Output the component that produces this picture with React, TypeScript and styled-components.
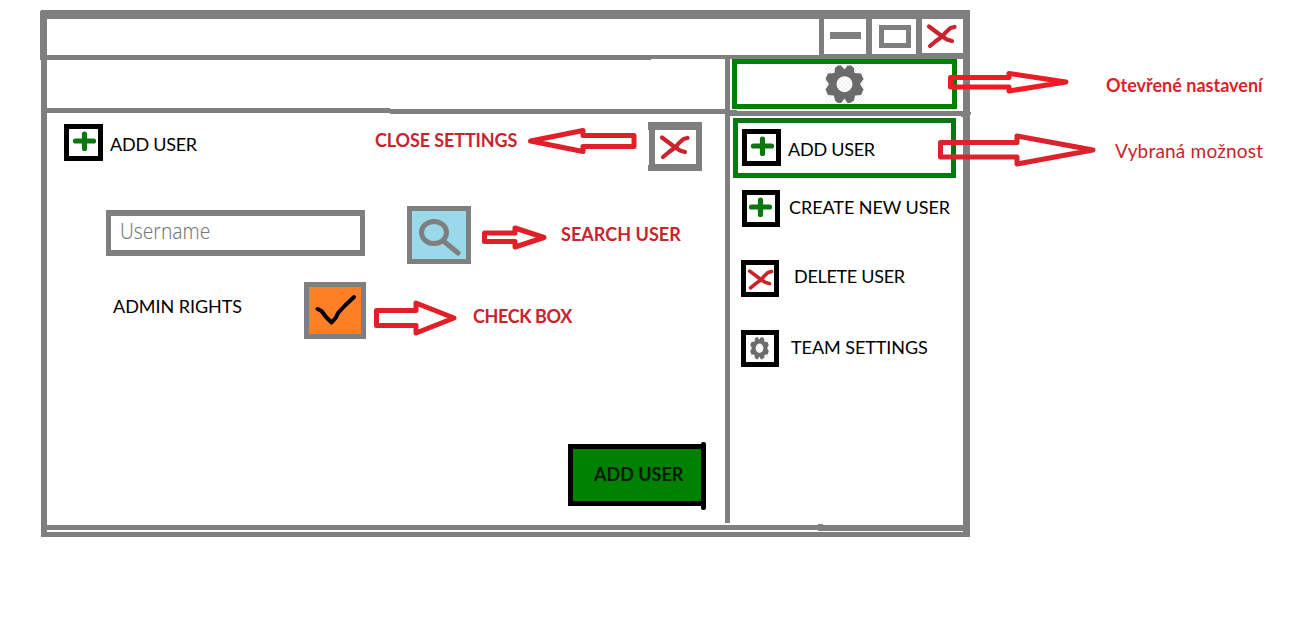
import React from "react";
import styled, { createGlobalStyle, css } from "styled-components";

const GRAY = "#7f7f7f";
const GREEN = "#008000";
const RED = "#ed1c24";
const BRICK = "#c8242e";

const GlobalStyle = createGlobalStyle`
  * { box-sizing: border-box; }
  body { margin: 0; background: #fff; }
  button { padding: 0; font: inherit; }
  svg { display: block; flex: none; }
`;

const Page = styled.div`
  display: flex;
  align-items: flex-start;
  width: 1314px;
  height: 623px;
  padding: 10px 0 0 41px;
  overflow: hidden;
  background: #fff;
  font-family: Lato, "Liberation Sans", sans-serif;
`;

const Window = styled.main`
  position: relative;
  flex: none;
  display: flex;
  flex-direction: column;
  width: 929px;
  height: 527px;
  border-style: solid;
  border-color: ${GRAY};
  border-width: 9px 7px 5px 6px;

  &::before {
    content: "";
    position: absolute;
    left: -7px;
    top: -8px;
    width: 1px;
    height: 49px;
    background: ${GRAY};
  }
`;

const TitleBar = styled.header`
  flex: none;
  display: flex;
  height: 41px;
  margin-bottom: -1px;
`;

const Caption = styled.div`
  flex: 1;
  display: flex;
  align-items: flex-start;
  padding-top: 36px;
`;

const Rule = styled.div<{ $w?: number; $h: number }>`
  ${(p) => (p.$w ? css`width: ${p.$w}px;` : css`flex: 1;`)}
  height: ${(p) => p.$h}px;
  background: ${GRAY};
`;

const WindowButton = styled.button<{ $w: number; $edge: number; $base: number }>`
  display: flex;
  align-items: flex-start;
  width: ${(p) => p.$w}px;
  height: 40px;
  border: 0 solid ${GRAY};
  border-left-width: ${(p) => p.$edge}px;
  border-bottom-width: ${(p) => p.$base}px;
  background: #fff;
`;

const MinimizeMark = styled.span`
  width: 31px;
  height: 7px;
  margin: 13px 0 0 6px;
  background: ${GRAY};
`;

const MaximizeMark = styled.span`
  width: 32px;
  height: 23px;
  margin: 6px 0 0 7px;
  border: 5px solid ${GRAY};
`;

const Body = styled.div`
  flex: 1;
  display: flex;
  min-height: 0;
`;

const Main = styled.section`
  display: flex;
  flex-direction: column;
  width: 678px;
`;

const Toolbar = styled.div`
  flex: none;
  display: flex;
  align-items: flex-end;
  height: 55px;
`;

const ToolbarRule = styled.div<{ $w: number; $lift: number }>`
  width: ${(p) => p.$w}px;
  height: 5px;
  margin-bottom: ${(p) => p.$lift}px;
  background: ${GRAY};
`;

const Row = styled.div<{ $h: number; $indent: number }>`
  flex: none;
  display: flex;
  align-items: flex-start;
  height: ${(p) => p.$h}px;
  padding-left: ${(p) => p.$indent}px;
`;

const Label = styled.span<{
  $w: number;
  $top?: number;
  $left?: number;
  $size?: number;
  $track?: number;
  $bold?: boolean;
  $color?: string;
}>`
  flex: none;
  display: block;
  width: ${(p) => p.$w}px;
  margin: ${(p) => p.$top ?? 0}px 0 0 ${(p) => p.$left ?? 0}px;
  font-size: ${(p) => p.$size ?? 18}px;
  font-weight: ${(p) => (p.$bold ? 700 : 400)};
  line-height: 22px;
  letter-spacing: ${(p) => p.$track ?? 0}px;
  color: ${(p) => p.$color ?? "#000"};
  white-space: nowrap;
`;

const IconBox = styled.span<{ $w?: number; $top?: number }>`
  flex: none;
  display: block;
  width: ${(p) => p.$w ?? 38}px;
  height: 37px;
  margin-top: ${(p) => p.$top ?? 0}px;
  border: 5px solid #000;
  background: #fff;
`;

const CloseBox = styled.button`
  position: relative;
  width: 53px;
  height: 49px;
  margin: 8px 0 0 12px;
  border: solid ${GRAY};
  border-width: 8px 6px 7px 6px;
  background: #fff;

  &::before,
  &::after {
    content: "";
    position: absolute;
    left: -7px;
    width: 1px;
    background: ${GRAY};
  }
  &::before { top: -8px; height: 8px; }
  &::after { bottom: -7px; height: 6px; }
`;

const NameField = styled.div`
  flex: none;
  width: 259px;
  height: 46px;
  margin-top: 4px;
  padding-left: 9px;
  border: solid ${GRAY};
  border-width: 6px 5px;
`;

const Placeholder = styled.span`
  display: inline-block;
  font: 300 21.5px/29px "Noto Sans", "Open Sans", sans-serif;
  color: #777;
  transform: scaleX(0.89);
  transform-origin: left center;
`;

const SearchButton = styled.button`
  flex: none;
  width: 64px;
  height: 58px;
  margin-left: 42px;
  border: 5px solid ${GRAY};
  background: #99d9ea;
`;

const CheckBox = styled.button`
  flex: none;
  width: 62px;
  height: 57px;
  margin-left: 62px;
  border: 5px solid ${GRAY};
  background: #ff7f27;
`;

const SubmitButton = styled.button`
  position: relative;
  flex: none;
  width: 138px;
  height: 62px;
  margin: 0 0 0 521px;
  padding-bottom: 2px;
  border: 5px solid #000;
  background: ${GREEN};
  text-align: left;

  &::after {
    content: "";
    position: absolute;
    right: -5px;
    top: -7px;
    width: 5px;
    height: 68px;
    border-radius: 2px;
    background: #000;
  }
`;

const Divider = styled.div`
  flex: none;
  width: 5px;
  height: 464px;
  background: ${GRAY};
`;

const Sidebar = styled.aside`
  display: flex;
  flex-direction: column;
  width: 233px;
`;

const SettingsTab = styled.button`
  position: relative;
  flex: none;
  width: 225px;
  height: 50px;
  margin-left: 2px;
  border: 5px solid ${GREEN};
  background: #fff;
`;

const SidebarRule = styled.div`
  position: relative;
  flex: none;
  height: 5px;
  margin: 2px 0;
  background: ${GRAY};

  &::before,
  &::after {
    content: "";
    position: absolute;
    background: ${GRAY};
  }
  &::before { left: 0; top: -1px; width: 7px; height: 1px; }
  &::after { right: -8px; top: 1px; width: 10px; height: 5px; clip-path: polygon(0 0, 100% 0, 100% 50%, 80% 50%, 80% 100%, 0 100%); }
`;

const MenuItem = styled.button<{ $h: number; $active?: boolean; $indent: number }>`
  flex: none;
  display: flex;
  align-items: flex-start;
  width: ${(p) => (p.$active ? 223 : 230)}px;
  height: ${(p) => p.$h}px;
  margin-left: ${(p) => (p.$active ? 3 : 0)}px;
  padding: ${(p) => (p.$active ? "6px 0 0 4px" : `0 0 0 ${p.$indent}px`)};
  border: ${(p) => (p.$active ? "5px solid #0b780f" : "0")};
  background: transparent;
  text-align: left;
`;

const Footer = styled.div`
  flex: none;
  display: flex;
  align-items: flex-start;
  height: 7px;
  margin-right: -2px;
`;

const FooterStub = styled.div`
  width: 5px;
  height: 7px;
  margin-top: -1px;
  background: ${GRAY};
`;

const Notes = styled.aside`
  position: relative;
  flex: none;
  display: flex;
  flex-direction: column;
  width: 376px;
  margin-left: -32px;
`;

type ArrowProps = { w: number; h: number; d: string; color?: string; top?: number; left?: number };

const ArrowSvg = styled.svg<{ $top: number; $left: number }>`
  margin: ${(p) => p.$top}px 0 0 ${(p) => p.$left}px;
`;

const Arrow = ({ w, h, d, color = "#e01f29", top = 0, left = 0 }: ArrowProps) => (
  <ArrowSvg $top={top} $left={left} width={w} height={h} viewBox={`0 0 ${w} ${h}`}>
    <path d={d} fill="none" stroke={color} strokeWidth="5" strokeLinejoin="round" />
  </ArrowSvg>
);

const Plus = ({ x = 4 }: { x?: number }) => (
  <svg width="28" height="27" viewBox="0 0 28 27">
    <path d={`M${x + 2.5} 12h18M${x + 11.5} 5v14.500`} stroke="#0b780f" strokeWidth="5.200" strokeLinecap="round" />
  </svg>
);

const Cross = ({ w, h, x, y, s = 1 }: { w: number; h: number; x: number; y: number; s?: number }) => (
  <svg width={w} height={h} viewBox={`0 0 ${w} ${h}`}>
    <g transform={`translate(${x} ${y}) scale(${s})`} fill="none" stroke={BRICK} strokeWidth="4.200" strokeLinecap="round" strokeLinejoin="round">
      <path d="M2 2.500L8 7L15.300 12.500L20 15.500L25 17" />
      <path d="M27.500 3L23.500 4L18.500 8.500L15.300 12.500L9 17L3 22" />
    </g>
  </svg>
);

const gearPath =
  "M19.500 4.500L22.500 .5H26L29 3L29.500 8L36 8.500L38.500 14L35 19L38.500 24.500L36 30L30 30.500L29 35.500L25 38H22.500L19.500 33.500L16 38H13L10 35.500L9 30.500L3 30L.5 24.500L4 19L.5 14L3 8.500L9.500 8L10 3L13 .5H16Z M19.500 11.200a8 8 0 1 0 0 16a8 8 0 1 0 0-16Z";

const Gear = ({ w, h, x, y, gw, gh, id }: { w: number; h: number; x: number; y: number; gw: number; gh: number; id: string }) => (
  <svg width={w} height={h} viewBox={`0 0 ${w} ${h}`}>
    <defs>
      <pattern id={id} width="4" height="4" patternUnits="userSpaceOnUse">
        <path d="M0 0h2v2H0zM2 2h2v2H2z" fill="#f1f1f1" />
      </pattern>
    </defs>
    <rect x={x} y={y} width={gw} height={gh} fill={`url(#${id})`} />
    <g transform={`translate(${x} ${y}) scale(${gw / 39} ${gh / 38.5})`}>
      <path d={gearPath} fill="#6b6b6b" fillRule="evenodd" />
    </g>
  </svg>
);

export default function App() {
  return (
    <Page>
      <GlobalStyle />
      <Window>
        <TitleBar>
          <Caption>
            <Rule $w={604} $h={5} />
            <Rule $h={4} />
          </Caption>
          <WindowButton $w={47} $edge={5} $base={5} aria-label="Minimize">
            <MinimizeMark />
          </WindowButton>
          <WindowButton $w={50} $edge={6} $base={5} aria-label="Maximize">
            <MaximizeMark />
          </WindowButton>
          <WindowButton $w={47} $edge={6} $base={6} aria-label="Close">
            <Cross w={41} h={34} x={5} y={5} />
          </WindowButton>
        </TitleBar>
        <Body>
          <Main>
            <Toolbar>
              <ToolbarRule $w={343} $lift={1} />
              <ToolbarRule $w={335} $lift={0} />
            </Toolbar>
            <Row $h={92} $indent={17}>
              <IconBox $w={39} $top={10}><Plus /></IconBox>
              <Label $w={265} $top={19} $left={7} $track={-0.25}>ADD USER</Label>
              <Label $w={152} $top={15} $bold $track={-0.12} $color={BRICK}>CLOSE SETTINGS</Label>
              <Arrow w={110} h={28} top={13} left={0} d="M3.500 14L56 3.500V8.500H107V19.500H56V24.500Z" />
              <CloseBox aria-label="Close settings">
                <Cross w={41} h={34} x={5} y={5} />
              </CloseBox>
            </Row>
            <Row $h={76} $indent={59}>
              <NameField>
                <Placeholder>Username</Placeholder>
              </NameField>
              <SearchButton aria-label="Search user">
                <svg width="54" height="48" viewBox="0 0 54 48">
                  <ellipse cx="22" cy="21.500" rx="12.500" ry="11" fill="none" stroke={GRAY} strokeWidth="5" />
                  <path d="M31.500 30L46 42" stroke={GRAY} strokeWidth="5" strokeLinecap="round" />
                </svg>
              </SearchButton>
              <Arrow w={68} h={28} top={18} left={11} d="M2.500 9H33V4L62 13.500L33 23V17.500H2.500Z" />
              <Label $w={130} $top={17} $left={11} $bold $track={0.04} $color={BRICK}>SEARCH USER</Label>
            </Row>
            <Row $h={162} $indent={66}>
              <Label $w={129} $top={13} $track={-0.05}>ADMIN RIGHTS</Label>
              <CheckBox aria-label="Admin rights">
                <svg width="52" height="47" viewBox="0 0 52 47">
                  <path d="M8.500 22L12.500 24L17 30L22.500 35.500L27 30.500L29 26L36 18.500L45 10" fill="none" stroke="#000" strokeWidth="4" strokeLinecap="round" strokeLinejoin="round" />
                </svg>
              </CheckBox>
              <Arrow w={86} h={38} top={17} left={8} d="M2.500 11.500H42V4L80 19L42 34V26.500H2.500Z" />
              <Label $w={110} $top={23} $left={13} $bold $track={-0.4} $color={BRICK}>CHECK BOX</Label>
            </Row>
            <SubmitButton>
              <Label $w={92} $left={21} $bold $color="#001a00">ADD USER</Label>
            </SubmitButton>
          </Main>
          <Divider />
          <Sidebar>
            <SettingsTab aria-label="Settings">
              <Gear id="tabChecks" w={215} h={40} x={88} y={1} gw={39} gh={38.5} />
            </SettingsTab>
            <SidebarRule />
            <MenuItem $h={60} $active $indent={0}>
              <IconBox $w={39}><Plus /></IconBox>
              <Label $w={90} $top={9} $left={7} $track={-0.25}>ADD USER</Label>
            </MenuItem>
            <MenuItem $h={82} $indent={12}>
              <IconBox $top={12}><Plus x={2} /></IconBox>
              <Label $w={165} $top={18} $left={9} $track={-0.07}>CREATE NEW USER</Label>
            </MenuItem>
            <MenuItem $h={70} $indent={11}>
              <IconBox><Cross w={28} h={27} x={2} y={4} s={0.86} /></IconBox>
              <Label $w={115} $top={5} $left={15} $track={-0.3}>DELETE USER</Label>
            </MenuItem>
            <MenuItem $h={40} $indent={11}>
              <IconBox><Gear id="teamChecks" w={28} h={27} x={4} y={2} gw={19} gh={22.5} /></IconBox>
              <Label $w={145} $top={6} $left={12} $track={-0.07}>TEAM SETTINGS</Label>
            </MenuItem>
          </Sidebar>
        </Body>
        <Footer>
          <Rule $w={771} $h={5} />
          <FooterStub />
          <Rule $h={6} />
        </Footer>
      </Window>
      <Notes>
        <Row $h={62} $indent={10}>
          <Arrow w={124} h={26} top={60} color={RED} d="M2.500 7.500H61V3.500L118 12L61 21V17H2.500Z" />
          <Label $w={165} $top={64} $left={34} $bold $color="#dd1f2b">Otevřené nastavení</Label>
        </Row>
        <Row $h={62} $indent={0}>
          <Arrow w={160} h={38} top={60} color="#dc222c" d="M2.500 10.500H79V4L155 18L79 32V25H2.500Z" />
          <Label $w={155} $top={68} $left={17} $size={19} $track={0.2} $color={BRICK}>Vybraná možnost</Label>
        </Row>
      </Notes>
    </Page>
  );
}
